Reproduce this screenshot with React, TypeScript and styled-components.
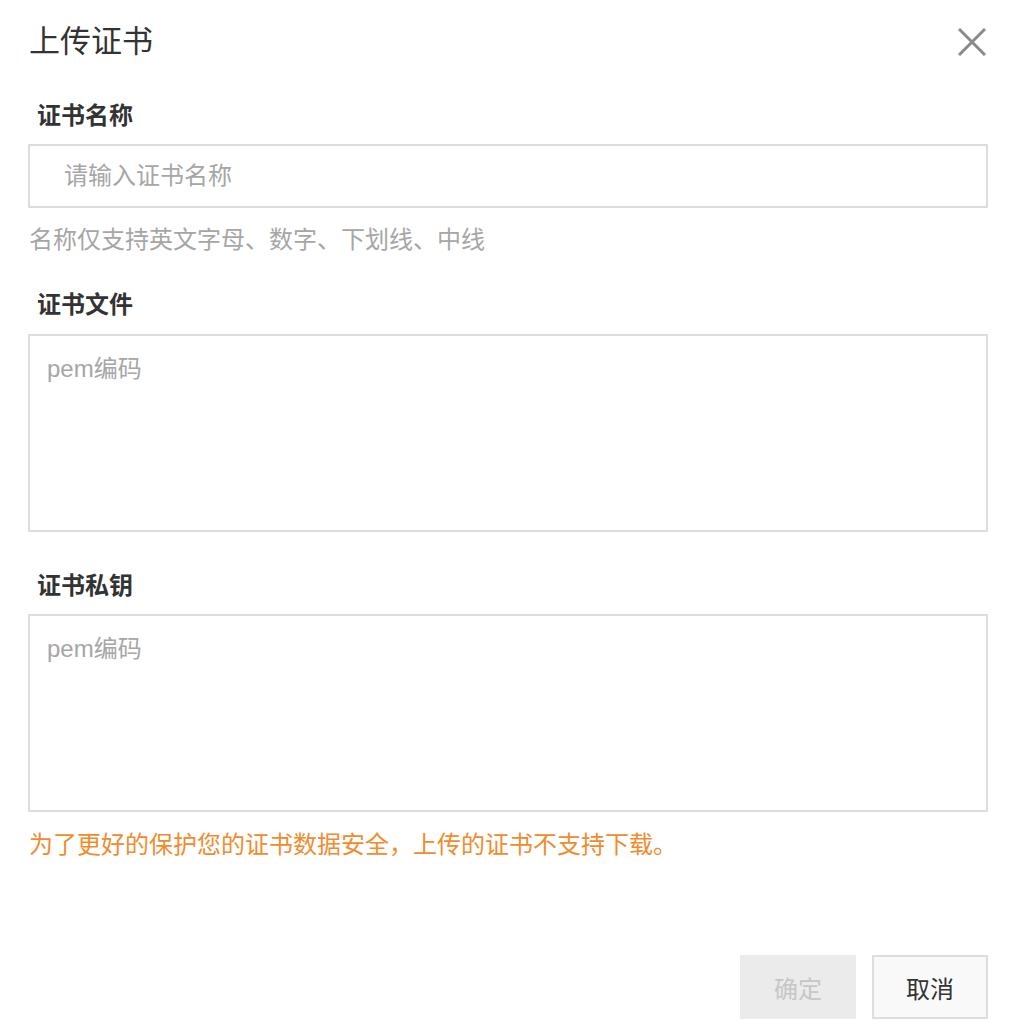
import React from "react";
import styled, { createGlobalStyle } from "styled-components";

const GlobalStyle = createGlobalStyle`
  html, body {
    margin: 0;
    padding: 0;
    background: #ffffff;
  }
  body {
    font-family: "Liberation Sans", "Noto Sans CJK SC", sans-serif;
    color: #333;
  }
  * { box-sizing: border-box; }
`;

const Dialog = styled.div`
  width: 1022px;
  height: 1034px;
  padding: 0 34px 0 28px;
  display: flex;
  flex-direction: column;
  background: #fff;
`;

const Header = styled.div`
  height: 84px;
  display: flex;
  align-items: center;
  justify-content: space-between;
`;

const Title = styled.h1`
  margin: 0 0 0 1px;
  font-size: 31px;
  font-weight: 400;
  line-height: 84px;
  color: #333;
`;

const CloseButton = styled.button`
  width: 30px;
  height: 30px;
  padding: 0;
  margin-right: 1px;
  border: none;
  background: transparent;
  display: flex;
  align-items: center;
  justify-content: center;
  cursor: pointer;
`;

const Label = styled.div<{ $top: number }>`
  margin-top: ${(p) => p.$top}px;
  padding-left: 9px;
  font-size: 24px;
  font-weight: 700;
  line-height: 32px;
  color: #333;
`;

const TextInput = styled.input<{ $top: number }>`
  margin-top: ${(p) => p.$top}px;
  width: 100%;
  height: 64px;
  border: 2px solid #dddddd;
  padding: 0 0 0 34px;
  font-family: inherit;
  font-size: 24px;
  color: #333;
  outline: none;
  &::placeholder { color: #a6a6a6; }
`;

const TextArea = styled.textarea<{ $top: number }>`
  margin-top: ${(p) => p.$top}px;
  width: 100%;
  height: 198px;
  border: 2px solid #dddddd;
  padding: 17px 17px;
  font-family: inherit;
  font-size: 24px;
  line-height: 32px;
  color: #333;
  resize: none;
  outline: none;
  &::placeholder { color: #a6a6a6; }
`;

const Hint = styled.div<{ $top: number; $warn?: boolean }>`
  margin-top: ${(p) => p.$top}px;
  padding-left: 1px;
  font-size: 24px;
  line-height: 32px;
  color: ${(p) => (p.$warn ? "#f08c2e" : "#a6a6a6")};
`;

const Footer = styled.div`
  margin-top: 94px;
  display: flex;
  justify-content: flex-end;
  gap: 16px;
`;

const Button = styled.button<{ $primary?: boolean }>`
  width: 116px;
  height: 64px;
  font-family: inherit;
  font-size: 24px;
  border: 2px solid ${(p) => (p.$primary ? "#ebebeb" : "#dddddd")};
  background: ${(p) => (p.$primary ? "#ebebeb" : "#f9f9f9")};
  color: ${(p) => (p.$primary ? "#c6c6c6" : "#333")};
  cursor: ${(p) => (p.$primary ? "not-allowed" : "pointer")};
`;

export default function App() {
  return (
    <>
      <GlobalStyle />
      <Dialog>
        <Header>
          <Title>上传证书</Title>
          <CloseButton aria-label="关闭">
            <svg width="28" height="28" viewBox="0 0 28 28">
              <path d="M1 1 L27 27 M27 1 L1 27" stroke="#8a8a8a" strokeWidth="3" fill="none" />
            </svg>
          </CloseButton>
        </Header>
        <Label $top={16}>证书名称</Label>
        <TextInput $top={12} placeholder="请输入证书名称" />
        <Hint $top={16}>名称仅支持英文字母、数字、下划线、中线</Hint>
        <Label $top={33}>证书文件</Label>
        <TextArea $top={13} placeholder="pem编码" />
        <Label $top={38}>证书私钥</Label>
        <TextArea $top={12} placeholder="pem编码" />
        <Hint $top={17} $warn>为了更好的保护您的证书数据安全，上传的证书不支持下载。</Hint>
        <Footer>
          <Button $primary disabled>确定</Button>
          <Button>取消</Button>
        </Footer>
      </Dialog>
    </>
  );
}
